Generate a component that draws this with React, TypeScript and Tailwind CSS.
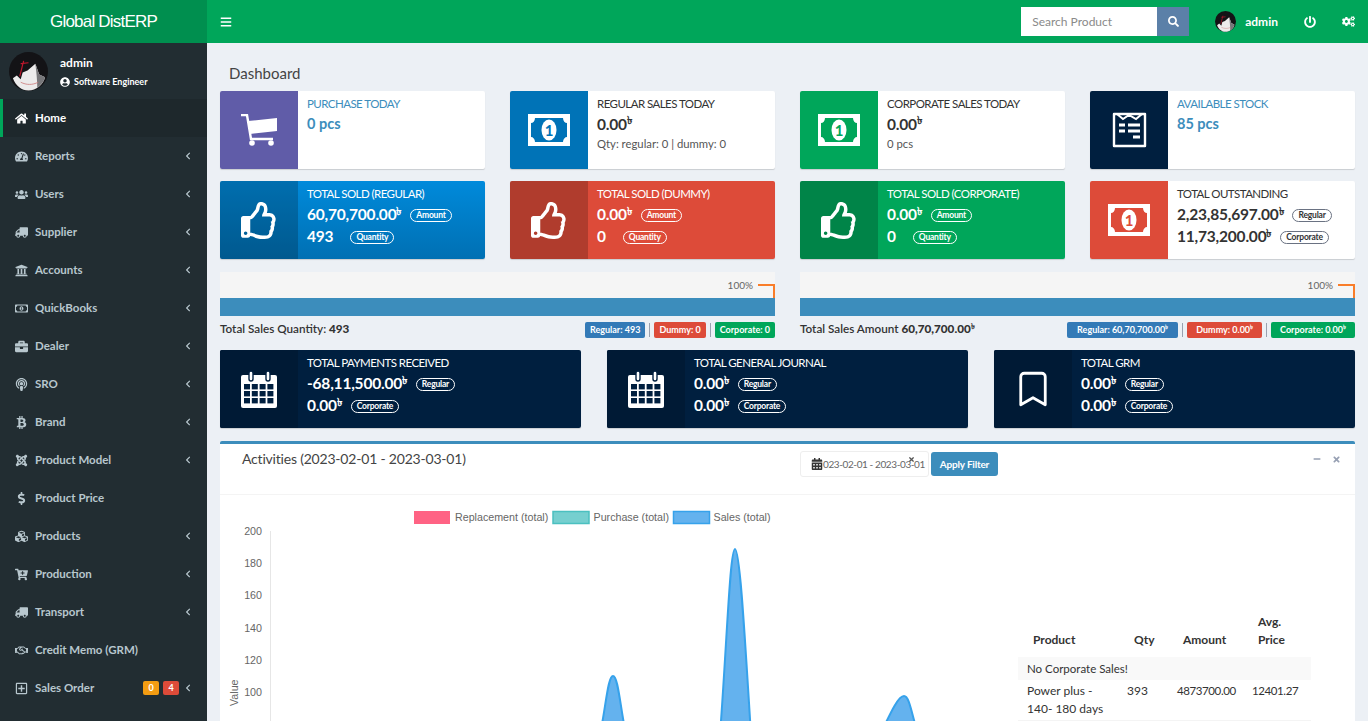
import type { ReactNode } from 'react'
import {
  FaBars, FaBriefcase, FaBtc, FaCalendarAlt, FaCartPlus, FaChevronLeft, FaCogs, FaCubes, FaDollarSign, FaHome,
  FaJoomla, FaPodcast, FaPowerOff, FaRegHandshake, FaRegMoneyBillAlt, FaRegPlusSquare, FaRegThumbsUp, FaSearch,
  FaTachometerAlt, FaTimes, FaTruck, FaUniversity, FaUserCircle, FaUsers, FaMinus,
} from 'react-icons/fa'
import { Bookmark } from 'lucide-react'

const menu = [
  { label: 'Reports', icon: <FaTachometerAlt />, arrow: true },
  { label: 'Users', icon: <FaUsers />, arrow: true },
  { label: 'Supplier', icon: <FaTruck className="-scale-x-100" />, arrow: true },
  { label: 'Accounts', icon: <FaUniversity />, arrow: true },
  { label: 'QuickBooks', icon: <FaRegMoneyBillAlt />, arrow: true },
  { label: 'Dealer', icon: <FaBriefcase />, arrow: true },
  { label: 'SRO', icon: <FaPodcast />, arrow: true },
  { label: 'Brand', icon: <FaBtc />, arrow: true },
  { label: 'Product Model', icon: <FaJoomla />, arrow: true },
  { label: 'Product Price', icon: <FaDollarSign />, arrow: false },
  { label: 'Products', icon: <FaCubes />, arrow: true },
  { label: 'Production', icon: <FaCartPlus />, arrow: true },
  { label: 'Transport', icon: <FaTruck className="-scale-x-100" />, arrow: true },
  { label: 'Credit Memo (GRM)', icon: <FaRegHandshake />, arrow: false },
]

function Avatar({ size }: { size: number }) {
  return (
    <svg width={size} height={size} viewBox="0 0 40 40" className="shrink-0">
      <circle cx="20" cy="20" r="20" fill="#131316" />
      <path d="M4 27 C7 35 13 39.5 20 39.5 C28 39.5 35 34 37 26 L31 23 L27 12 L19 19 L14 21 L12 28 L8 24 Z" fill="#ecebeb" />
      <path d="M27 12 L31 23 L37 26 C36 30 33 34 29 37 C29 28 28 20 27 12 Z" fill="#77777a" />
      <path d="M15 9 L11 25 M12 12 L20 11" stroke="#c2162c" strokeWidth="1.2" fill="none" />
      <path d="M12 31 C18 34 24 34 30 31" stroke="#c77" strokeWidth="0.8" fill="none" />
    </svg>
  )
}

function Cart() {
  return (
    <svg width="38" height="33" viewBox="0 0 38 33" fill="white">
      <path d="M1 1 H7 L11 25 H33" stroke="white" strokeWidth="2.4" fill="none" />
      <path d="M8 7 L37 4 V17 L10 20 Z" />
      <circle cx="12" cy="29" r="2.8" />
      <circle cx="31" cy="29" r="2.8" />
    </svg>
  )
}

function Cash({ bg }: { bg: string }) {
  return (
    <svg width="42" height="32" viewBox="0 0 42 32">
      <rect y="0" width="42" height="32" fill="white" />
      <path d="M7 4 H35 C35 7 37 9 39 9 V23 C37 23 35 25 35 28 H7 C7 25 5 23 3 23 V9 C5 9 7 7 7 4 Z" fill={bg} />
      <ellipse cx="21" cy="16" rx="7.5" ry="10.5" fill="white" />
      <text x="21" y="21.5" textAnchor="middle" fontSize="15" fontWeight="700" fontFamily="Lato" fill={bg}>1</text>
    </svg>
  )
}

function Stock() {
  return (
    <svg width="35" height="36" viewBox="0 0 35 36" fill="none">
      <path d="M2 2 H33 V34 H2 Z" stroke="white" strokeWidth="2.4" strokeLinejoin="round" />
      <path d="M5 2 L11 7 L17 3 L24 7 L30 2" stroke="white" strokeWidth="2" />
      <path d="M7 13 H13 M16 13 H28 M7 19 H13 M16 19 H28 M21 25 H28" stroke="white" strokeWidth="3" />
    </svg>
  )
}

function Calendar() {
  const cells = [0, 1, 2, 3]
  return (
    <svg width="38" height="39" viewBox="0 0 38 39">
      <rect x="1" y="5" width="36" height="33" rx="2" fill="white" />
      <rect x="9" y="1" width="4" height="10" rx="2" fill="white" stroke="#001f3f" strokeWidth="1.4" />
      <rect x="26" y="1" width="4" height="10" rx="2" fill="white" stroke="#001f3f" strokeWidth="1.4" />
      {[14, 21, 28].map((y) =>
        cells.map((i) => <rect key={`${y}-${i}`} x={4 + i * 7.8} y={y} width="6" height="5.4" fill="#001f3f" />),
      )}
    </svg>
  )
}

function Taka() {
  return <sup className="text-[0.72em] font-bold leading-none">৳</sup>
}

function Pill({ text, dark }: { text: string; dark?: boolean }) {
  return (
    <span className={`inline-flex h-[13px] items-center rounded-full border px-[5px] text-[8.5px] font-bold leading-none ${dark ? 'border-gray-500 text-[#333]' : 'border-white text-white'}`}>
      {text}
    </span>
  )
}

function ValueRow({ value, pill, taka = true, gap, dark }: { value: string; pill: string; taka?: boolean; gap: string; dark?: boolean }) {
  return (
    <div className={`flex h-[22px] items-center text-[15.5px] font-bold leading-none tracking-[-0.2px] ${gap}`}>
      <span>
        {value}
        {taka && <Taka />}
      </span>
      <Pill text={pill} dark={dark} />
    </div>
  )
}

function InfoBox({ iconBg, bg, text = 'text-[#333]', icon, children }: { iconBg: string; bg: string; text?: string; icon: ReactNode; children: ReactNode }) {
  return (
    <div className={`flex h-[78px] overflow-hidden rounded-[2px] shadow-[0_1px_1px_rgba(0,0,0,0.15)] ${bg} ${text}`}>
      <div className={`flex w-[78px] shrink-0 items-center justify-center ${iconBg}`}>{icon}</div>
      <div className="min-w-0 flex-1 pl-[9px] pt-[4px]">{children}</div>
    </div>
  )
}

function Title({ children }: { children: ReactNode }) {
  return <div className="text-[11.5px] uppercase leading-[17px] tracking-[-0.55px]">{children}</div>
}

function Progress() {
  return (
    <div className="relative h-[44px] bg-[#f5f5f5]">
      <span className="absolute right-[22px] top-[6px] text-[10px] text-[#666]">100%</span>
      <span className="absolute right-0 top-[12px] h-[14px] w-[17px] border-r-2 border-t-2 border-[#f97d2a]" />
      <div className="absolute inset-x-0 bottom-0 h-[18px] bg-[#3c8dbc]" />
    </div>
  )
}

function Chip({ bg, px = 'px-[5px]', children }: { bg: string; px?: string; children: ReactNode }) {
  return <span className={`flex h-[16px] items-center rounded-[2px] text-[9px] font-bold text-white ${px} ${bg}`}>{children}</span>
}

function Sep() {
  return <span className="mx-[4px] h-[14px] w-px bg-gray-400" />
}

function DarkBox({ icon, title, rows }: { icon: ReactNode; title: string; rows: { value: string; pill: string; gap: string }[] }) {
  return (
    <InfoBox iconBg="bg-[#001a35]" bg="bg-[#001f3f]" text="text-white" icon={icon}>
      <Title>{title}</Title>
      <div className="mt-[2px]">
        {rows.map((r) => (
          <ValueRow key={r.pill} value={r.value} pill={r.pill} gap={r.gap} />
        ))}
      </div>
    </InfoBox>
  )
}

export default function App() {
  return (
    <div className="flex h-screen overflow-hidden bg-[#ecf0f5] font-['Lato',sans-serif] text-[13px] text-[#333]">
      <aside className="flex w-[207px] shrink-0 flex-col bg-[#222d32]">
        <div className="flex h-[43px] shrink-0 items-center justify-center bg-[#008f4f] font-['Liberation_Sans',sans-serif] text-[17px] tracking-[-0.8px] text-white">
          Global DistERP
        </div>
        <div className="flex h-[56px] shrink-0 items-center pl-[9px]">
          <Avatar size={39} />
          <div className="ml-[12px] text-white">
            <div className="text-[12px] font-bold leading-[17px]">admin</div>
            <div className="mt-[4px] flex items-center gap-[4px] text-[9px] font-bold leading-[13px]">
              <FaUserCircle className="text-[10px]" /> Software Engineer
            </div>
          </div>
        </div>
        <nav>
          <div className="flex h-[38px] items-center border-l-[3px] border-[#00a65a] bg-[#1e282c] pl-[12px] font-bold text-white">
            <span className="w-[20px] text-[13px]"><FaHome /></span>
            <span className="text-[11.5px]">Home</span>
          </div>
          {menu.map((m) => (
            <div key={m.label} className="flex h-[38px] items-center pl-[15px] pr-[15px] text-[#b8c7ce]">
              <span className="w-[20px] text-[13px]">{m.icon}</span>
              <span className="flex-1 text-[11.5px] font-bold">{m.label}</span>
              {m.arrow && <FaChevronLeft className="text-[8px]" />}
            </div>
          ))}
          <div className="flex h-[38px] items-center pl-[15px] pr-[15px] text-[#b8c7ce]">
            <span className="w-[20px] text-[13px]"><FaRegPlusSquare /></span>
            <span className="flex-1 text-[11.5px] font-bold">Sales Order</span>
            <span className="flex h-[14px] w-[16px] items-center justify-center rounded-[2px] bg-[#f39c12] text-[9px] font-bold text-white">0</span>
            <span className="ml-[4px] flex h-[14px] w-[16px] items-center justify-center rounded-[2px] bg-[#dd4b39] text-[9px] font-bold text-white">4</span>
            <FaChevronLeft className="ml-[5px] text-[8px]" />
          </div>
        </nav>
      </aside>

      <div className="flex min-w-0 flex-1 flex-col">
        <header className="flex h-[43px] shrink-0 items-center bg-[#00a65a] text-white">
          <FaBars className="ml-[13px] text-[12px]" />
          <div className="ml-auto flex h-[29px] w-[168px] items-stretch">
            <div className="flex w-[136px] items-center bg-white pl-[11px] text-[12px] text-[#8a8a8a]">Search Product</div>
            <div className="flex flex-1 items-center justify-center bg-[#5b80a8]"><FaSearch className="text-[11px]" /></div>
          </div>
          <div className="ml-[26px]"><Avatar size={21} /></div>
          <span className="ml-[9px] text-[12px] font-bold">admin</span>
          <FaPowerOff className="ml-[26px] text-[12px]" />
          <FaCogs className="ml-[26px] mr-[13px] text-[13px]" />
        </header>

        <main className="min-h-0 flex-1 overflow-hidden pl-[13px] pr-[13px]">
          <h1 className="ml-[9px] h-[48px] pt-[20px] text-[15px] leading-[21px] text-[#444]">Dashboard</h1>

          <div className="grid grid-cols-4 gap-x-[25px] gap-y-[12px]">
            <InfoBox iconBg="bg-[#605ca8]" bg="bg-white" icon={<Cart />}>
              <div className="text-[#3c8dbc]">
                <Title>Purchase Today</Title>
                <div className="mt-[1px] text-[14.5px] font-bold leading-[22px]">0 pcs</div>
              </div>
            </InfoBox>
            <InfoBox iconBg="bg-[#0073b7]" bg="bg-white" icon={<Cash bg="#0073b7" />}>
              <Title>Regular Sales Today</Title>
              <div className="mt-[1px] text-[15.5px] font-bold leading-[22px] tracking-[-0.2px]">0.00<Taka /></div>
              <div className="text-[11.3px] leading-[17px] text-[#555]">Qty: regular: 0 | dummy: 0</div>
            </InfoBox>
            <InfoBox iconBg="bg-[#00a65a]" bg="bg-white" icon={<Cash bg="#00a65a" />}>
              <Title>Corporate Sales Today</Title>
              <div className="mt-[1px] text-[15.5px] font-bold leading-[22px] tracking-[-0.2px]">0.00<Taka /></div>
              <div className="text-[11.3px] leading-[17px] text-[#555]">0 pcs</div>
            </InfoBox>
            <InfoBox iconBg="bg-[#001f3f]" bg="bg-white" icon={<Stock />}>
              <div className="text-[#3c8dbc]">
                <Title>Available Stock</Title>
                <div className="mt-[1px] text-[14.5px] font-bold leading-[22px]">85 pcs</div>
              </div>
            </InfoBox>

            <InfoBox iconBg="bg-black/20" bg="bg-gradient-to-b from-[#008adb] to-[#0070b3]" text="text-white" icon={<FaRegThumbsUp className="text-[37px]" />}>
              <Title>Total Sold (Regular)</Title>
              <div className="mt-[2px]">
                <ValueRow value="60,70,700.00" pill="Amount" gap="gap-[9px]" />
                <ValueRow value="493" pill="Quantity" taka={false} gap="gap-[17px]" />
              </div>
            </InfoBox>
            <InfoBox iconBg="bg-black/20" bg="bg-[#dd4b39]" text="text-white" icon={<FaRegThumbsUp className="text-[37px]" />}>
              <Title>Total Sold (Dummy)</Title>
              <div className="mt-[2px]">
                <ValueRow value="0.00" pill="Amount" gap="gap-[9px]" />
                <ValueRow value="0" pill="Quantity" taka={false} gap="gap-[17px]" />
              </div>
            </InfoBox>
            <InfoBox iconBg="bg-black/20" bg="bg-[#00a65a]" text="text-white" icon={<FaRegThumbsUp className="text-[37px]" />}>
              <Title>Total Sold (Corporate)</Title>
              <div className="mt-[2px]">
                <ValueRow value="0.00" pill="Amount" gap="gap-[9px]" />
                <ValueRow value="0" pill="Quantity" taka={false} gap="gap-[17px]" />
              </div>
            </InfoBox>
            <InfoBox iconBg="bg-[#dd4b39]" bg="bg-white" icon={<Cash bg="#dd4b39" />}>
              <Title>Total Outstanding</Title>
              <div className="mt-[2px]">
                <ValueRow value="2,23,85,697.00" pill="Regular" gap="gap-[9px]" dark />
                <ValueRow value="11,73,200.00" pill="Corporate" gap="gap-[9px]" dark />
              </div>
            </InfoBox>
          </div>

          <div className="mt-[13px] grid grid-cols-2 gap-x-[25px]">
            <div>
              <Progress />
              <div className="mt-[6px] flex h-[16px] items-center">
                <span className="mb-[3px] text-[11.7px] font-semibold">Total Sales Quantity: <b>493</b></span>
                <div className="ml-auto flex items-center">
                  <Chip bg="bg-[#337ab7]">Regular: 493</Chip>
                  <Sep />
                  <Chip bg="bg-[#dd4b39]">Dummy: 0</Chip>
                  <Sep />
                  <Chip bg="bg-[#00a65a]">Corporate: 0</Chip>
                </div>
              </div>
            </div>
            <div>
              <Progress />
              <div className="mt-[6px] flex h-[16px] items-center">
                <span className="mb-[3px] text-[11.7px] font-semibold">Total Sales Amount <b>60,70,700.00</b><Taka /></span>
                <div className="ml-auto flex items-center">
                  <Chip bg="bg-[#337ab7]" px="px-[10px]">Regular: 60,70,700.00<Taka /></Chip>
                  <Sep />
                  <Chip bg="bg-[#dd4b39]" px="px-[9px]">Dummy: 0.00<Taka /></Chip>
                  <Sep />
                  <Chip bg="bg-[#00a65a]" px="px-[9px]">Corporate: 0.00<Taka /></Chip>
                </div>
              </div>
            </div>
          </div>

          <div className="mt-[12px] grid grid-cols-3 gap-x-[26px]">
            <DarkBox
              icon={<Calendar />}
              title="Total Payments Received"
              rows={[
                { value: '-68,11,500.00', pill: 'Regular', gap: 'gap-[9px]' },
                { value: '0.00', pill: 'Corporate', gap: 'gap-[9px]' },
              ]}
            />
            <DarkBox
              icon={<Calendar />}
              title="Total General Journal"
              rows={[
                { value: '0.00', pill: 'Regular', gap: 'gap-[9px]' },
                { value: '0.00', pill: 'Corporate', gap: 'gap-[9px]' },
              ]}
            />
            <DarkBox
              icon={<Bookmark size={42} strokeWidth={1.6} />}
              title="Total GRM"
              rows={[
                { value: '0.00', pill: 'Regular', gap: 'gap-[9px]' },
                { value: '0.00', pill: 'Corporate', gap: 'gap-[9px]' },
              ]}
            />
          </div>

          <section className="mt-[13px] rounded-[2px] border-t-[3px] border-[#3c8dbc] bg-white">
            <div className="flex h-[51px] items-start border-b border-[#f4f4f4]">
              <h2 className="ml-[22px] mt-[5px] w-[558px] text-[14px] leading-[20px] tracking-[-0.2px] text-[#444]">Activities (2023-02-01 - 2023-03-01)</h2>
              <div className="relative mt-[7px] flex h-[26px] w-[129px] items-center overflow-hidden rounded-[3px] border border-[#eee] text-[10px] tracking-[-0.4px] text-[#666]">
                <span className="ml-[22px] whitespace-nowrap">023-02-01 - 2023-03-01</span>
                <FaCalendarAlt className="absolute left-[10px] top-[6px] text-[12px] text-[#333]" />
                <FaTimes className="absolute right-[13px] top-[4px] text-[7px] text-[#555]" />
              </div>
              <button className="ml-[2px] mt-[8px] h-[24px] w-[67px] rounded-[3px] bg-[#3c8dbc] text-[10px] font-bold tracking-[-0.2px] text-white">Apply Filter</button>
              <FaMinus className="ml-[315px] mt-[11px] text-[8px] text-[#97a0b3]" />
              <FaTimes className="ml-[11px] mt-[11px] text-[9px] text-[#97a0b3]" />
            </div>
            <div className="flex">
              <svg width="790" height="240" viewBox="220 495 790 240" className="shrink-0" fontFamily="Liberation Sans" fontSize="10.7" fill="#666">
                <rect x="414" y="511" width="36" height="13" fill="#ff6384" />
                <text x="455" y="521">Replacement (total)</text>
                <rect x="553" y="511.5" width="36" height="12" fill="#76cfcf" stroke="#4bc0c0" strokeWidth="1.5" />
                <text x="593.5" y="521">Purchase (total)</text>
                <rect x="673.5" y="511.5" width="36" height="12" fill="#64b2ee" stroke="#36a2eb" strokeWidth="1.5" />
                <text x="713.5" y="521">Sales (total)</text>
                <path d="M270.5 531 V735" stroke="#e6e6e6" />
                {[200, 180, 160, 140, 120, 100].map((v, i) => (
                  <text key={v} x="262" y={535 + i * 32.2} textAnchor="end">{v}</text>
                ))}
                <text transform="translate(238 706) rotate(-90)">Value</text>
                <g fill="#64b2ee" stroke="#36a2eb" strokeWidth="2">
                  <path d="M600 735 C606 705 608 676 613 676 C618 676 620 705 626 735 Z" />
                  <path d="M720 735 C727 640 730 549 735 549 C740 549 745 640 751 735 Z" />
                  <path d="M880 735 C890 714 898 696 904 696 C909 696 911 710 918 735 Z" />
                </g>
              </svg>
              <table className="ml-[8px] mt-[118px] h-fit w-[293px] table-fixed border-collapse text-[12px]">
                <colgroup>
                  <col className="w-[101px]" />
                  <col className="w-[49px]" />
                  <col className="w-[76px]" />
                  <col className="w-[67px]" />
                </colgroup>
                <thead>
                  <tr className="align-bottom font-bold">
                    <th className="pb-[8px] pl-[15px] text-left leading-[18px]">Product</th>
                    <th className="pb-[8px] pl-[15px] text-left leading-[18px]">Qty</th>
                    <th className="pb-[8px] pl-[15px] text-left leading-[18px]">Amount</th>
                    <th className="pb-[8px] pl-[14px] text-left leading-[18px]">Avg. Price</th>
                  </tr>
                </thead>
                <tbody>
                  <tr className="h-[23px] bg-[#f9f9f9]">
                    <td colSpan={4} className="pl-[9px] text-[11.5px]">No Corporate Sales!</td>
                  </tr>
                  <tr className="border-b border-[#f4f4f4] align-top leading-[18px]">
                    <td className="py-[2px] pl-[9px]">Power plus - 140- 180 days</td>
                    <td className="py-[2px] pl-[8px]">393</td>
                    <td className="py-[2px] pl-[9px] text-[11.5px] tracking-[-0.4px]">4873700.00</td>
                    <td className="py-[2px] pl-[8px] text-[11.5px] tracking-[-0.4px]">12401.27</td>
                  </tr>
                </tbody>
              </table>
            </div>
          </section>
        </main>
      </div>
    </div>
  )
}
